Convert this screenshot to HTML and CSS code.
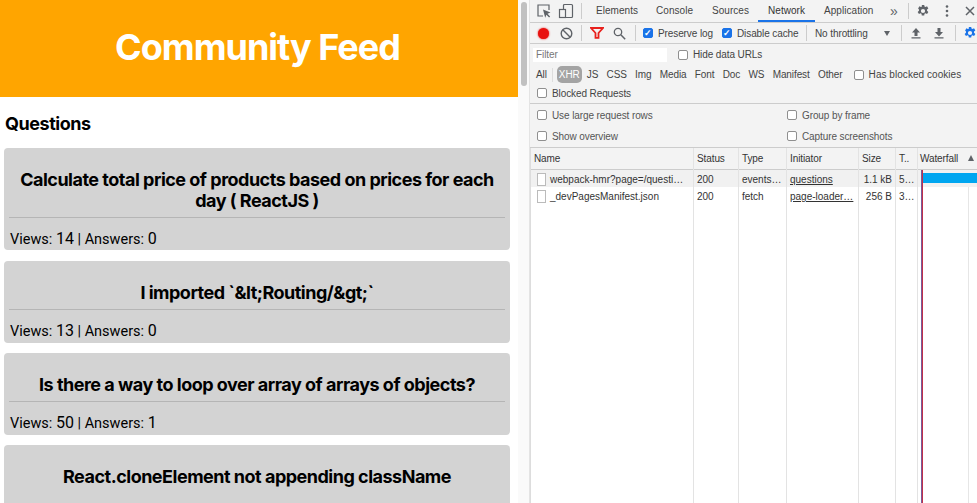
FILE: index.html
```html
<!DOCTYPE html>
<html lang="en">
<head>
<meta charset="utf-8">
<title>Community Feed</title>
<link rel="stylesheet" href="styles.css">
</head>
<body>
<div class="app">
  <main class="page">
    <header class="hero"><h1>Community Feed</h1></header>
    <h2 class="section">Questions</h2>
    <article class="card tall">
      <h3>Calculate total price of products based on prices for each day ( ReactJS )</h3>
      <hr>
      <p>Views: <span class="num">14</span> | Answers: <span class="num">0</span></p>
    </article>
    <article class="card">
      <h3>I imported `&amp;lt;Routing/&amp;gt;`</h3>
      <hr>
      <p>Views: <span class="num">13</span> | Answers: <span class="num">0</span></p>
    </article>
    <article class="card">
      <h3>Is there a way to loop over array of arrays of objects?</h3>
      <hr>
      <p>Views: <span class="num">50</span> | Answers: <span class="num">1</span></p>
    </article>
    <article class="card">
      <h3>React.cloneElement not appending className</h3>
    </article>
  </main>
  <div class="scrollbar"><div class="thumb"></div></div>
  <section class="devtools">
    <div class="tabs">
      <svg class="ic first" width="18" height="18" viewBox="0 0 18 18"><path d="M8 14H3V3h11v5" fill="none" stroke="#5f6368" stroke-width="1.2"/><path d="M8 7.5l7.5 3-3 1.2 2.6 2.8-1 1-2.700-2.800-1.200 3z" fill="#5f6368"/></svg>
      <svg class="ic device" width="18" height="18" viewBox="0 0 18 18"><rect x="6.500" y="2.500" width="9" height="13" rx="1" fill="none" stroke="#5f6368" stroke-width="1.200"/><rect x="2.500" y="7.500" width="6" height="8" fill="#f3f3f3" stroke="#5f6368" stroke-width="1.200"/></svg>
      <span class="sep tabsep"></span>
      <span class="tab t-el">Elements</span>
      <span class="tab t-con">Console</span>
      <span class="tab t-src">Sources</span>
      <span class="tab active">Network</span>
      <span class="tab t-app">Application</span>
      <span class="more">»</span>
      <span class="sep"></span>
      <svg class="ic gear" width="14" height="14" viewBox="0 0 16 16"><path fill-rule="evenodd" fill="#5f6368" d="M6.600 1h2.800l.3 1.900 1.200.6 1.700-.9 1.500 2.400-1.500 1.200v1.600l1.500 1.200-1.500 2.400-1.700-.9-1.200.6-.3 1.900H6.600l-.3-1.900-1.200-.6-1.700.9-1.500-2.400 1.500-1.200V6.200L2.400 5l1.500-2.400 1.700.9 1.200-.6zM8 5.600a2.400 2.400 0 1 0 0 4.800 2.400 2.400 0 0 0 0-4.800z"/></svg>
      <svg class="ic dots" width="4" height="12" viewBox="0 0 4 12"><circle cx="2" cy="1.500" r="1.300" fill="#5f6368"/><circle cx="2" cy="6" r="1.300" fill="#5f6368"/><circle cx="2" cy="10.500" r="1.300" fill="#5f6368"/></svg>
      <svg class="ic close" width="10" height="10" viewBox="0 0 10 10"><path d="M1 1l8 8M9 1L1 9" stroke="#5f6368" stroke-width="1.500"/></svg>
    </div>
    <div class="toolbar">
      <span class="rec"></span>
      <svg class="ic clear" width="13" height="13" viewBox="0 0 13 13"><circle cx="6.500" cy="6.500" r="5.300" fill="none" stroke="#5f6368" stroke-width="1.400"/><path d="M2.800 2.800l7.400 7.400" stroke="#5f6368" stroke-width="1.400"/></svg>
      <span class="sep"></span>
      <svg class="ic funnel" width="14" height="12" viewBox="0 0 14 12"><path d="M1 1h12L8.500 6v4.800h-3V6z" fill="none" stroke="#e8211d" stroke-width="1.800"/></svg>
      <svg class="ic search" width="13" height="13" viewBox="0 0 13 13"><circle cx="5" cy="5" r="3.700" fill="none" stroke="#5f6368" stroke-width="1.300"/><path d="M7.800 7.800l4.400 4.400" stroke="#5f6368" stroke-width="1.500"/></svg>
      <span class="sep"></span>
      <label class="chk c-pres"><span class="box on">✓</span>Preserve log</label>
      <label class="chk c-dis"><span class="box on">✓</span>Disable cache</label>
      <span class="sep"></span>
      <span class="throttle">No throttling</span>
      <span class="caret"></span>
      <span class="sep"></span>
      <svg class="ic up" width="10" height="12" viewBox="0 0 10 12"><path d="M5 1L1 5.500h2.500V9h3V5.500H9zM0.500 10.200h9v1.300h-9z" fill="#5f6368"/></svg>
      <svg class="ic down" width="10" height="12" viewBox="0 0 10 12"><path d="M5 9.500L1 5h2.500V1h3v4H9zM0.500 10.200h9v1.300h-9z" fill="#5f6368"/></svg>
      <span class="sep"></span>
      <svg class="ic cog" width="14" height="14" viewBox="0 0 16 16"><path fill-rule="evenodd" fill="#1a73e8" d="M6.600 1h2.800l.3 1.900 1.200.6 1.700-.9 1.500 2.400-1.500 1.200v1.600l1.500 1.200-1.500 2.400-1.700-.9-1.200.6-.3 1.900H6.600l-.3-1.900-1.200-.6-1.700.9-1.500-2.400 1.500-1.200V6.200L2.400 5l1.500-2.400 1.700.9 1.200-.6zM8 5.600a2.400 2.400 0 1 0 0 4.800 2.400 2.400 0 0 0 0-4.800z"/></svg>
    </div>
    <div class="filters">
      <div class="row filter-row">
        <span class="filter-input">Filter</span>
        <label class="chk"><span class="box"></span>Hide data URLs</label>
      </div>
      <div class="row type-row">
        <span class="type all">All</span>
        <span class="type-sep"></span>
        <span class="type xhr">XHR</span>
        <span class="type">JS</span>
        <span class="type">CSS</span>
        <span class="type">Img</span>
        <span class="type">Media</span>
        <span class="type">Font</span>
        <span class="type">Doc</span>
        <span class="type">WS</span>
        <span class="type">Manifest</span>
        <span class="type">Other</span>
        <label class="chk blocked-cookies"><span class="box"></span>Has blocked cookies</label>
      </div>
      <div class="row blocked-row">
        <label class="chk"><span class="box"></span>Blocked Requests</label>
      </div>
    </div>
    <div class="settings">
      <label class="chk"><span class="box"></span>Use large request rows</label>
      <label class="chk"><span class="box"></span>Group by frame</label>
      <label class="chk"><span class="box"></span>Show overview</label>
      <label class="chk"><span class="box"></span>Capture screenshots</label>
    </div>
    <div class="table">
      <div class="cols">
        <div class="col c-name"><div class="th">Name</div><div class="td hl"><span class="file"></span>webpack-hmr?page=/questi…</div><div class="td"><span class="file"></span>_devPagesManifest.json</div></div>
        <div class="col c-status"><div class="th">Status</div><div class="td hl">200</div><div class="td">200</div></div>
        <div class="col c-type"><div class="th">Type</div><div class="td hl">events…</div><div class="td">fetch</div></div>
        <div class="col c-init"><div class="th">Initiator</div><div class="td hl"><u>questions</u></div><div class="td"><u>page-loader…</u></div></div>
        <div class="col c-size"><div class="th">Size</div><div class="td hl right">1.1 kB</div><div class="td right">256 B</div></div>
        <div class="col c-time"><div class="th">T..</div><div class="td hl">5…</div><div class="td">3…</div></div>
        <div class="col c-wf">
          <div class="th">Waterfall<span class="sort"></span></div>
          <div class="td hl wf-bar"></div>
          <div class="td"></div>
          <div class="gridline"></div>
          <div class="redline"></div>
        </div>
      </div>
    </div>
  </section>
</div>
</body>
</html>
```

FILE: styles.css
```css
* { box-sizing: border-box; }
html, body { margin: 0; height: 100%; overflow: hidden; background: #fff; }
.app { display: flex; width: 977px; height: 503px; overflow: hidden; }

.page { width: 518px; flex: none; overflow: hidden; font-family: Inter, "Liberation Sans", sans-serif; color: #000; }
.hero { height: 97px; background: #ffa500; display: flex; align-items: center; justify-content: center; padding: 0 3px 4px 0; }
.hero h1 { margin: 0; color: #fff; font-size: 36px; font-weight: 700; line-height: 44px; letter-spacing: -1px; }
.section { margin: 16px 0 13px 5px; font-size: 18px; line-height: 22px; font-weight: 700; letter-spacing: -0.45px; }
.card { margin: 0 8px 10px 4px; background: #d3d3d3; border-radius: 4px; padding: 21px 5px 0; height: 82px; overflow: hidden; }
.card.tall { height: 102px; margin-bottom: 11px; }
.card h3 { margin: 0 6px; font-size: 18px; line-height: 21px; font-weight: 700; text-align: center; letter-spacing: -0.5px; }
.card hr { margin: 6px 0 0; border: 0; border-top: 1px solid #b5b5b5; }
.card p { margin: 11px 0 0 1px; font-family: Roboto, "Liberation Sans", sans-serif; font-size: 14.500px; line-height: 20px; }
.num { font-size: 16px; }

.scrollbar { width: 12px; flex: none; background: #fafafa; border-right: 1px solid #e4e4e4; padding: 2px 2px 0 3px; }
.thumb { width: 6px; height: 84px; border-radius: 3px; background: #c1c1c1; }

.devtools { flex: 1; min-width: 0; background: #f3f3f3; font-family: "Liberation Sans", Arial, sans-serif; font-size: 10px; letter-spacing: -0.1px; color: #444; }
.ic { flex: none; display: block; }
.sep { width: 1px; height: 16px; background: #ccc; flex: none; }

.tabs { height: 23px; display: flex; align-items: center; border-bottom: 1px solid #ccc; padding-left: 5px; }
.tabs .first { width: 18px; }
.tabs .device { margin-left: 4px; }
.tabsep { margin: 0 14px 0 6px; }
.tab { height: 22px; line-height: 22px; flex: none; letter-spacing: 0.05px; }
.t-el { width: 60px; }
.t-con { width: 56px; }
.t-src { width: 46px; }
.tab.active { color: #333; border-bottom: 2px solid #1a73e8; width: 57px; padding-left: 10px; }
.t-app { margin-left: 9px; width: 59px; }
.more { margin: 0 10px 0 7px; font-size: 14px; line-height: 18px; color: #5f6368; }
.tabs .gear { margin-left: 7px; }
.tabs .dots { margin-left: 15px; }
.tabs .close { margin-left: 16px; }

.toolbar { height: 21px; display: flex; align-items: center; border-bottom: 1px solid #ccc; padding-left: 8px; }
.rec { width: 11px; height: 11px; border-radius: 50%; background: #e8110f; flex: none; box-shadow: 0 0 2px #e8110f; }
.clear { margin: 0 8px 0 11px; }
.funnel { margin-left: 8px; }
.search { margin: 0 9px 0 9px; }
.c-pres { margin-left: 7px; width: 79px; }
.c-dis { width: 84px; }
.throttle { margin-left: 8px; width: 69px; flex: none; }
.caret { width: 0; height: 0; border: 3.500px solid transparent; border-top: 5px solid #5f6368; border-bottom: 0; margin: 0 11px 0 0; flex: none; }
.up { margin-left: 9px; }
.down { margin: 0 11px 0 13px; }
.cog { margin-left: 7px; }

.chk { display: inline-flex; align-items: center; white-space: nowrap; }
.box { width: 10px; height: 10px; border: 1px solid #8f8f8f; border-radius: 2px; background: #fff; margin-right: 5px; flex: none; display: block; line-height: 8px; text-align: center; font-size: 9px; font-weight: 700; overflow: hidden; }
.box.on { background: #1a73e8; border-color: #1a73e8; color: #fff; }

.filters { height: 60px; border-bottom: 1px solid #ccc; }
.row { display: flex; align-items: center; height: 20px; }
.filter-row { height: 21px; padding-left: 3px; }
.filter-input { width: 134px; height: 14px; line-height: 14px; background: #fff; padding-left: 3px; color: #777; margin-right: 11px; }
.type-row { padding-left: 6px; height: 19px; }
.type { padding: 0 4.150px; line-height: 15px; flex: none; }
.type.all { padding: 0; margin-right: 5px; }
.type-sep { width: 1px; height: 14px; background: #ddd; margin-right: 4px; }
.type.xhr { background: #a4a4a4; color: #fff; border-radius: 5px; padding: 0 2px; line-height: 17px; margin-right: 1px; }
.blocked-cookies { margin-left: 7px; letter-spacing: 0.05px; }
.row.blocked-row { padding-left: 7px; height: 18px; }

.settings { height: 44px; display: grid; grid-template-columns: 250px 1fr; grid-auto-rows: 21px; padding-left: 7px; align-content: center; border-bottom: 1px solid #ccc; color: #555; }

.table { height: 355px; background: #fff; border-left: 1px solid #ddd; }
.cols { display: flex; height: 100%; }
.col { height: 100%; border-right: 1px solid #e3e3e3; flex: none; position: relative; }
.th { height: 22px; line-height: 21px; background: #f3f3f3; padding: 0 3px; border-bottom: 1px solid #ccc; color: #333; white-space: nowrap; }
.td { height: 17px; line-height: 19px; padding: 0 3px; white-space: nowrap; color: #333; font-size: 10px; letter-spacing: 0; }
.td.hl { background: #f1f1f1; }
.td.right { text-align: right; }
.file { display: inline-block; width: 9px; height: 13px; border: 1px solid #bbb; background: #fff; margin: 0 4px 0 3px; vertical-align: -3px; }
.c-name { width: 163px; }
.c-status { width: 45px; }
.c-type { width: 48px; }
.c-init { width: 72px; }
.c-size { width: 37px; }
.c-time { width: 22px; }
.c-wf { flex: 1; border-right: 0; }
.c-wf .th { padding-left: 2px; }
.sort { display: inline-block; width: 0; height: 0; border: 3.500px solid transparent; border-bottom: 6px solid #5f6368; border-top: 0; margin-left: 10px; vertical-align: 1px; }
.wf-bar { position: relative; z-index: 1; background: #f1f1f1; }
.wf-bar::after { content: ""; position: absolute; left: 5px; right: 0; top: 3px; bottom: 4px; background: #00a6f0; }
.redline { position: absolute; z-index: 2; left: 3px; top: 22px; bottom: 0; width: 2px; background: linear-gradient(90deg, #7a5a9a 0 50%, #c0304a 50% 100%); }
.gridline { position: absolute; left: 50px; top: 22px; bottom: 0; width: 1px; background: #e6e6e6; }
```
